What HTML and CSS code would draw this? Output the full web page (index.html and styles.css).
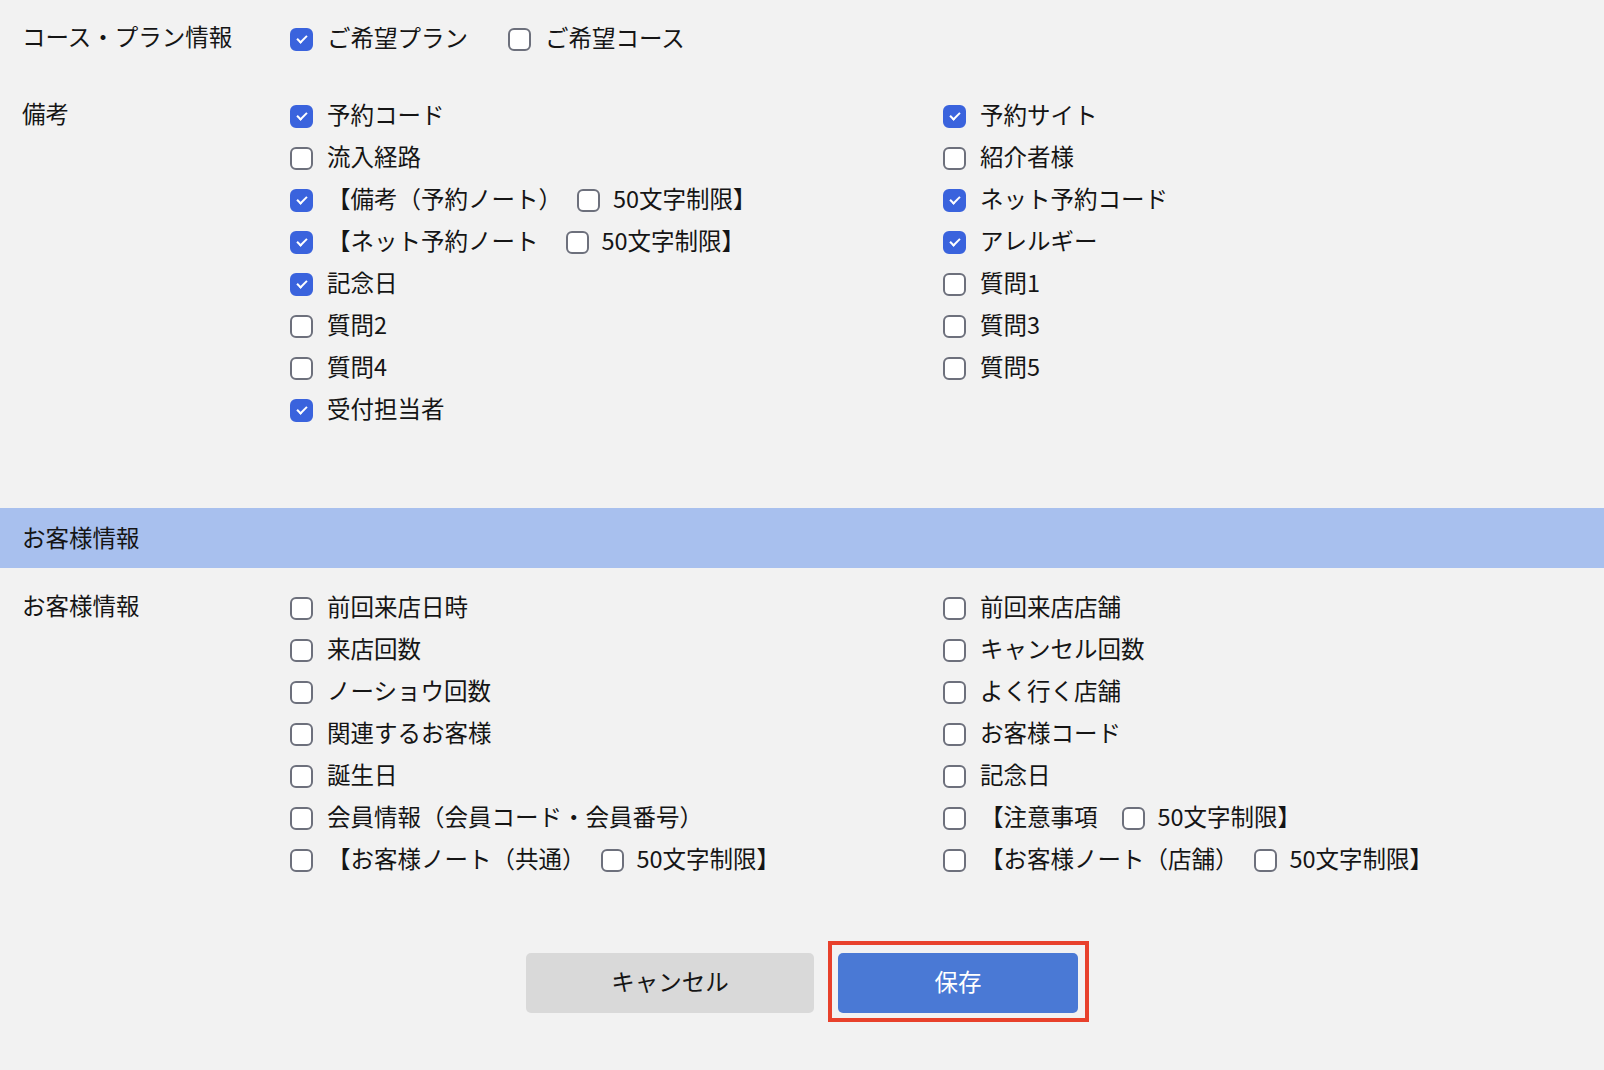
FILE: index.html
```html
<!DOCTYPE html>
<html lang="ja">
<head>
    <meta charset="UTF-8">
    <meta name="viewport" content="width=device-width, initial-scale=1.0">
    <title>項目設定</title>
    <link rel="stylesheet" href="styles.css">
</head>
<body>
    <div class="section plan">
        <div class="label">コース・プラン情報</div>
        <div class="inline">
            <label class="opt"><span class="box on"></span>ご希望プラン</label>
            <label class="opt"><span class="box"></span>ご希望コース</label>
        </div>
    </div>

    <div class="section notes">
        <div class="label">備考</div>
        <div class="grid">
            <label class="opt"><span class="box on"></span>予約コード</label>
            <label class="opt"><span class="box on"></span>予約サイト</label>
            <label class="opt"><span class="box"></span>流入経路</label>
            <label class="opt"><span class="box"></span>紹介者様</label>
            <label class="opt"><span class="box on"></span>【備考（予約ノート）<span class="box sub"></span>50文字制限】</label>
            <label class="opt"><span class="box on"></span>ネット予約コード</label>
            <label class="opt"><span class="box on"></span>【ネット予約ノート<span class="box sub wide"></span>50文字制限】</label>
            <label class="opt"><span class="box on"></span>アレルギー</label>
            <label class="opt"><span class="box on"></span>記念日</label>
            <label class="opt"><span class="box"></span>質問1</label>
            <label class="opt"><span class="box"></span>質問2</label>
            <label class="opt"><span class="box"></span>質問3</label>
            <label class="opt"><span class="box"></span>質問4</label>
            <label class="opt"><span class="box"></span>質問5</label>
            <label class="opt"><span class="box on"></span>受付担当者</label>
        </div>
    </div>

    <div class="band">お客様情報</div>

    <div class="section customer">
        <div class="label">お客様情報</div>
        <div class="grid">
            <label class="opt"><span class="box"></span>前回来店日時</label>
            <label class="opt"><span class="box"></span>前回来店店舗</label>
            <label class="opt"><span class="box"></span>来店回数</label>
            <label class="opt"><span class="box"></span>キャンセル回数</label>
            <label class="opt"><span class="box"></span>ノーショウ回数</label>
            <label class="opt"><span class="box"></span>よく行く店舗</label>
            <label class="opt"><span class="box"></span>関連するお客様</label>
            <label class="opt"><span class="box"></span>お客様コード</label>
            <label class="opt"><span class="box"></span>誕生日</label>
            <label class="opt"><span class="box"></span>記念日</label>
            <label class="opt"><span class="box"></span>会員情報（会員コード・会員番号）</label>
            <label class="opt"><span class="box"></span>【注意事項<span class="box sub mid"></span>50文字制限】</label>
            <label class="opt"><span class="box"></span>【お客様ノート（共通）<span class="box sub"></span>50文字制限】</label>
            <label class="opt"><span class="box"></span>【お客様ノート（店舗）<span class="box sub"></span>50文字制限】</label>
        </div>
    </div>

    <div class="actions">
        <button class="btn cancel">キャンセル</button>
        <div class="highlight">
            <button class="btn save">保存</button>
        </div>
    </div>
</body>
</html>
```

FILE: styles.css
```css
html, body {
    background-color: #f2f2f2;
}
body {
    margin: 0;
    padding: 17px 0 40px;
    color: #151515;
    font-family: "Noto Sans CJK JP", "Noto Sans", sans-serif;
    font-size: 23.5px;
}
.section {
    display: flex;
    padding-left: 22px;
}
.label {
    width: 268px;
    flex-shrink: 0;
    height: 38px;
    line-height: 38px;
}
.inline {
    display: flex;
    gap: 40px;
}
.grid {
    display: grid;
    grid-template-columns: 653px 653px;
    grid-auto-rows: 42px;
}
.customer .grid {
    grid-auto-rows: 42.1px;
}
.notes {
    margin-top: 35px;
}
.opt {
    display: flex;
    align-items: center;
    height: 42px;
    padding-bottom: 3px;
    box-sizing: border-box;
    white-space: nowrap;
}
.box {
    position: relative;
    top: 2.5px;
    width: 23px;
    height: 23px;
    box-sizing: border-box;
    flex-shrink: 0;
    margin-right: 14px;
    border: 2px solid #6d707c;
    border-radius: 6px;
    background-color: #fff;
}
.box.on {
    border-color: #3a63dd;
    background-color: #3a63dd;
}
.box.on::after {
    content: "";
    position: absolute;
    left: 5px;
    top: 5px;
    width: 8px;
    height: 4px;
    border-left: 2.5px solid #fff;
    border-bottom: 2.5px solid #fff;
    transform: rotate(-45deg);
}
.box.sub {
    margin-left: 15px;
    margin-right: 13px;
}
.box.sub.wide {
    margin-left: 27px;
}
.box.sub.mid {
    margin-left: 24px;
}
.band {
    margin-top: 78px;
    height: 60px;
    line-height: 58px;
    padding-left: 22px;
    background-color: #a8c0ee;
}
.customer {
    margin-top: 18px;
}
.actions {
    display: flex;
    justify-content: center;
    align-items: flex-start;
    gap: 24px;
    margin-top: 72px;
}
.btn {
    display: block;
    height: 60px;
    padding: 0 0 4px;
    border: none;
    border-radius: 5px;
    font-family: inherit;
    font-size: 23.5px;
    cursor: pointer;
}
.cancel {
    width: 288px;
    background-color: #d9d9d9;
    color: #151515;
}
.save {
    width: 240px;
    background-color: #4a79d5;
    color: #fff;
}
/* red annotation frame around the save button */
.highlight {
    height: 60px;
    padding: 8px 7px 5px 6px;
    margin: -12px -11px -9px -10px;
    border: 4px solid #e8412c;
    box-sizing: content-box;
}
```
